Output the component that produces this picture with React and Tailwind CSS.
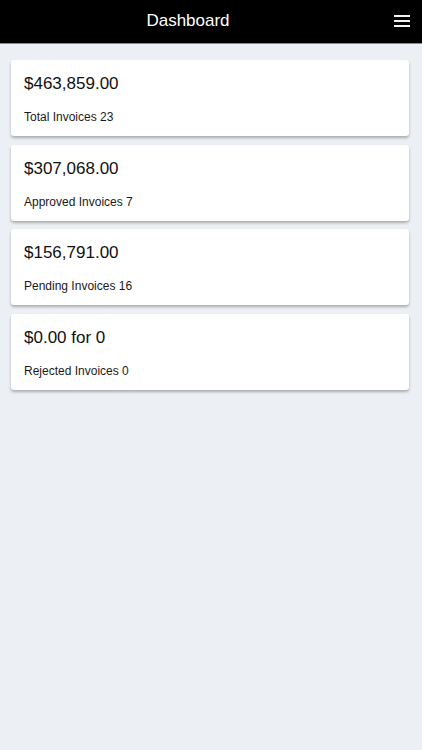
import React from "react";

const cards = [
  { amount: "$463,859.00", label: "Total Invoices 23" },
  { amount: "$307,068.00", label: "Approved Invoices 7" },
  { amount: "$156,791.00", label: "Pending Invoices 16" },
  { amount: "$0.00 for 0", label: "Rejected Invoices 0" },
];

export default function App() {
  return (
    <div
      className="min-h-[750px] w-full bg-[#eceff3]"
      style={{ fontFamily: '"Liberation Sans", Arial, sans-serif' }}
    >
      <header className="flex h-[44px] items-center bg-black border-b border-[#8a8a8a]">
        <div className="flex-1 text-center text-[17px] leading-none text-white pb-[2px]">
          Dashboard
        </div>
        <div className="flex w-[46px] justify-end pr-[12px] pb-[2px]">
          <svg width="16" height="12" viewBox="0 0 16 12">
            <rect x="0" y="0" width="16" height="2" fill="#f2f2f2" />
            <rect x="0" y="5" width="16" height="2" fill="#f2f2f2" />
            <rect x="0" y="10" width="16" height="2" fill="#f2f2f2" />
          </svg>
        </div>
      </header>
      <main className="flex flex-col gap-[8.5px] px-[11px] pt-[16px] pr-[13px]">
        {cards.map((c) => (
          <div
            key={c.label}
            className="flex h-[76px] flex-col rounded-[3px] bg-white px-[13px] pt-[14px] shadow-[0_2px_3px_rgba(0,0,0,0.28)]"
          >
            <div className="text-[17px] leading-[20px] text-[#111]">{c.amount}</div>
            <div className="mt-[15px] text-[12px] leading-[16px] text-[#1a1a1a]">{c.label}</div>
          </div>
        ))}
      </main>
    </div>
  );
}
